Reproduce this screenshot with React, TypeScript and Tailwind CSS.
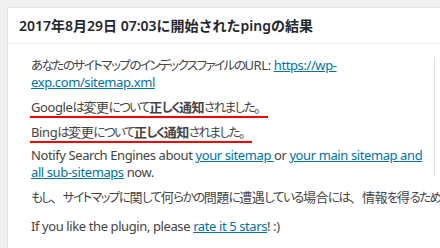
import React from "react";

const font = { fontFamily: '"Noto Sans", "Noto Sans CJK JP", sans-serif' };

const Link = ({ children }: { children: React.ReactNode }) => (
  <a href="#" className="text-[#0073aa] underline">
    {children}
  </a>
);

// the original renders narrow kana but full width kanji & punctuation,
// so split japanese text into runs and size them separately
const jp = (s: string) =>
  s
    .split(/([\u4e00-\u9fff、。]+)/)
    .filter((part) => part !== "")
    .map((part, i) =>
      /[\u4e00-\u9fff、。]/.test(part) ? (
        <span key={i} className="text-[13px] tracking-[-0.5px]">
          {part}
        </span>
      ) : (
        <span
          key={i}
          className="text-[12.5px] tracking-[-1.5px] [font-feature-settings:'palt']"
        >
          {part}
        </span>
      )
    );

const App = () => {
  return (
    <div
      className="w-[440px] h-[248px] overflow-hidden bg-[#f1f1f1] pt-[7px] pl-[7px]"
      style={font}
    >
      <div className="w-[500px] h-[300px] bg-white border border-[#e5e5e5]">
        <div className="h-[36px] flex items-center pl-[11px] border-b border-[#eee] text-[14px] font-semibold text-[#23282d]">
          2017年8月29日 07:03に開始されたpingの結果
        </div>
        <div className="pl-[23px] pt-[13px] text-[13px] leading-[17px] text-[#444] tracking-[-0.4px]">
          <div className="w-[404px] h-[119px] border-r border-[#ddd]">
            <p className="mb-[8px]">
              {jp("あなたのサイトマップのインデックスファイルの")}URL:{" "}
              <Link>https://wp-exp.com/sitemap.xml</Link>
            </p>
            <p className="w-fit -ml-[1px] pl-[1px] pr-[1px] mb-[6px] border-b-2 border-[#f00]">
              Google{jp("は変更について")}
              <b>{jp("正しく通知")}</b>
              {jp("されました。")}
            </p>
            <p className="w-fit -ml-[1px] pl-[1px] pr-[1px] mb-[4px] border-b-2 border-[#f00]">
              Bing{jp("は変更について")}
              <b>{jp("正しく通知")}</b>
              {jp("されました。")}
            </p>
            <p>
              Notify Search Engines about <Link>your sitemap </Link> or{" "}
              <Link>your main sitemap and all sub-sitemaps</Link> now.
            </p>
          </div>
          <p className="mt-[13px] whitespace-nowrap">
            {jp(
              "もし、サイトマップに関して何らかの問題に遭遇している場合には、情報を得るためにデバッグモードを使用してください。"
            )}
          </p>
          <p className="mt-[12px]">
            If you like the plugin, please <Link>rate it 5 stars</Link>! :)
          </p>
        </div>
      </div>
    </div>
  );
};

export default App;
